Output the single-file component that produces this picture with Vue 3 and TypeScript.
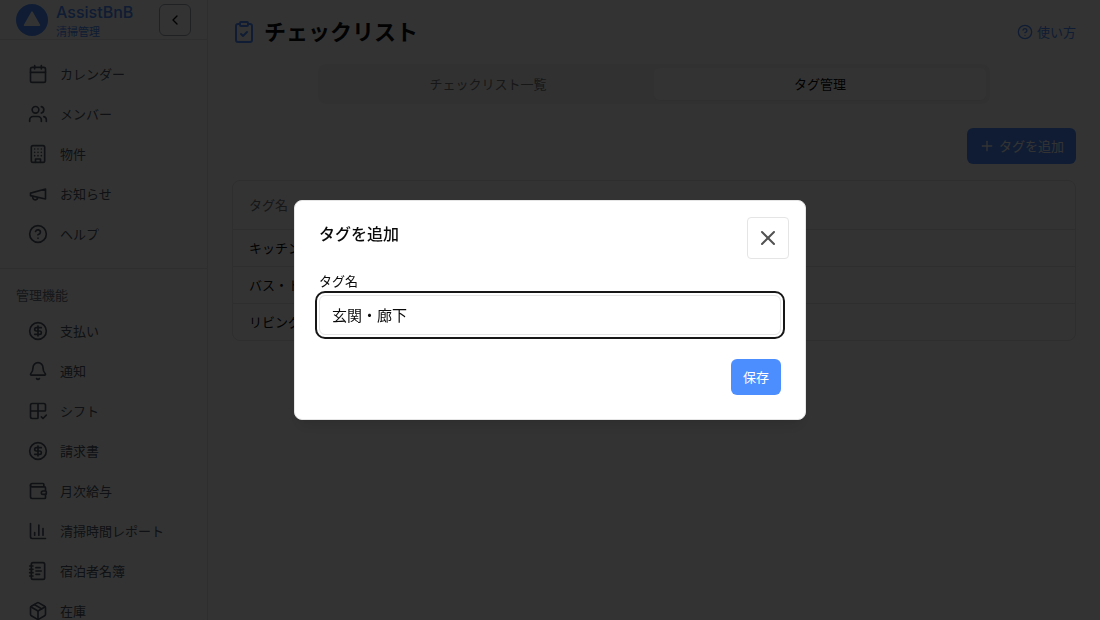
<script setup lang="ts">
import { ref } from 'vue'

type IconName =
  | 'calendar' | 'users' | 'building' | 'megaphone' | 'help' | 'dollar' | 'bell'
  | 'shift' | 'wallet' | 'chart' | 'notebook' | 'box' | 'clipboard' | 'plus' | 'close' | 'chevron'

interface NavItem {
  icon: IconName
  label: string
}

const icons: Record<IconName, string[]> = {
  calendar: ['M5 4h14a2 2 0 0 1 2 2v14a2 2 0 0 1-2 2H5a2 2 0 0 1-2-2V6a2 2 0 0 1 2-2z', 'M8 2v4', 'M16 2v4', 'M3 10h18'],
  users: ['M16 21v-2a4 4 0 0 0-4-4H6a4 4 0 0 0-4 4v2', 'M5 7a4 4 0 1 0 8 0a4 4 0 1 0-8 0', 'M22 21v-2a4 4 0 0 0-3-3.87', 'M16 3.13a4 4 0 0 1 0 7.75'],
  building: ['M6 2h12a2 2 0 0 1 2 2v16a2 2 0 0 1-2 2H6a2 2 0 0 1-2-2V4a2 2 0 0 1 2-2z', 'M9 22v-4h6v4', 'M8 6h.01', 'M16 6h.01', 'M12 6h.01', 'M12 10h.01', 'M12 14h.01', 'M16 10h.01', 'M16 14h.01', 'M8 10h.01', 'M8 14h.01'],
  megaphone: ['m3 11 18-5v12L3 14v-3z', 'M11.6 16.8a3 3 0 1 1-5.8-1.6'],
  help: ['M2 12a10 10 0 1 0 20 0a10 10 0 1 0-20 0', 'M9.09 9a3 3 0 0 1 5.83 1c0 2-3 3-3 3', 'M12 17h.01'],
  dollar: ['M2 12a10 10 0 1 0 20 0a10 10 0 1 0-20 0', 'M16 8h-6a2 2 0 1 0 0 4h4a2 2 0 1 1 0 4H8', 'M12 18V6'],
  bell: ['M10.268 21a2 2 0 0 0 3.464 0', 'M3.262 15.326A1 1 0 0 0 4 17h16a1 1 0 0 0 .74-1.673C19.41 13.956 18 12.499 18 8A6 6 0 0 0 6 8c0 4.499-1.411 5.956-2.738 7.326'],
  shift: ['M12 3v17a1 1 0 0 1-1 1H5a2 2 0 0 1-2-2V5a2 2 0 0 1 2-2h14a2 2 0 0 1 2 2v6a1 1 0 0 1-1 1H3', 'm16 19 2 2 4-4'],
  wallet: ['M19 7V4a1 1 0 0 0-1-1H5a2 2 0 0 0 0 4h15a1 1 0 0 1 1 1v4h-3a2 2 0 0 0 0 4h3a1 1 0 0 0 1-1v-2a1 1 0 0 0-1-1', 'M3 5v14a2 2 0 0 0 2 2h15a1 1 0 0 0 1-1v-4'],
  chart: ['M3 3v16a2 2 0 0 0 2 2h16', 'M18 17V9', 'M13 17V5', 'M8 17v-3'],
  notebook: ['M2 6h4', 'M2 10h4', 'M2 14h4', 'M2 18h4', 'M6 2h12a2 2 0 0 1 2 2v16a2 2 0 0 1-2 2H6a2 2 0 0 1-2-2V4a2 2 0 0 1 2-2z', 'M9.5 8h5', 'M9.5 12H16', 'M9.5 16H14'],
  box: ['M11 21.73a2 2 0 0 0 2 0l7-4A2 2 0 0 0 21 16V8a2 2 0 0 0-1-1.73l-7-4a2 2 0 0 0-2 0l-7 4A2 2 0 0 0 3 8v8a2 2 0 0 0 1 1.73z', 'M12 22V12', 'M3.29 7 12 12l8.71-5', 'm7.5 4.27 9 5.15'],
  clipboard: ['M9 2h6a1 1 0 0 1 1 1v2a1 1 0 0 1-1 1H9a1 1 0 0 1-1-1V3a1 1 0 0 1 1-1z', 'M16 4h2a2 2 0 0 1 2 2v14a2 2 0 0 1-2 2H6a2 2 0 0 1-2-2V6a2 2 0 0 1 2-2h2', 'm9 14 2 2 4-4'],
  plus: ['M5 12h14', 'M12 5v14'],
  close: ['M18 6 6 18', 'm6 6 12 12'],
  chevron: ['m15 18-6-6 6-6'],
}

const mainNav: NavItem[] = [
  { icon: 'calendar', label: 'カレンダー' },
  { icon: 'users', label: 'メンバー' },
  { icon: 'building', label: '物件' },
  { icon: 'megaphone', label: 'お知らせ' },
  { icon: 'help', label: 'ヘルプ' },
]

const adminNav: NavItem[] = [
  { icon: 'dollar', label: '支払い' },
  { icon: 'bell', label: '通知' },
  { icon: 'shift', label: 'シフト' },
  { icon: 'dollar', label: '請求書' },
  { icon: 'wallet', label: '月次給与' },
  { icon: 'chart', label: '清掃時間レポート' },
  { icon: 'notebook', label: '宿泊者名簿' },
  { icon: 'box', label: '在庫' },
]

const tags = ref<string[]>(['キッチン', 'バス・トイレ', 'リビング'])
const tagName = ref('玄関・廊下')
const dialogOpen = ref(true)

function save(): void {
  const name = tagName.value.trim()
  if (name) tags.value.push(name)
  tagName.value = ''
  dialogOpen.value = false
}
</script>

<template>
  <div class="app">
    <aside class="sidebar">
      <header class="brand">
        <svg class="logo" viewBox="0 0 32 32" aria-hidden="true">
          <circle cx="16" cy="16" r="16" fill="#4d8eff" />
          <path d="M16 8.2 23.4 21.2H8.6z" fill="#fff" stroke="#fff" stroke-width="1.6" stroke-linejoin="round" />
        </svg>
        <div class="brand-text">
          <span class="brand-name">AssistBnB</span>
          <span class="brand-sub">清掃管理</span>
        </div>
        <button class="collapse" type="button" aria-label="サイドバーを閉じる">
          <svg class="icon icon-sm" viewBox="0 0 24 24"><path v-for="d in icons.chevron" :key="d" :d="d" /></svg>
        </button>
      </header>
      <nav class="nav">
        <a v-for="item in mainNav" :key="item.label" class="nav-item" href="#">
          <svg class="icon" viewBox="0 0 24 24"><path v-for="d in icons[item.icon]" :key="d" :d="d" /></svg>
          <span>{{ item.label }}</span>
        </a>
      </nav>
      <nav class="nav nav-admin" aria-labelledby="admin-heading">
        <h2 id="admin-heading" class="nav-heading">管理機能</h2>
        <a v-for="item in adminNav" :key="item.label" class="nav-item" href="#">
          <svg class="icon" viewBox="0 0 24 24"><path v-for="d in icons[item.icon]" :key="d" :d="d" /></svg>
          <span>{{ item.label }}</span>
        </a>
      </nav>
    </aside>

    <main class="main">
      <div class="page-head">
        <svg class="icon icon-lg" viewBox="0 0 24 24"><path v-for="d in icons.clipboard" :key="d" :d="d" /></svg>
        <h1>チェックリスト</h1>
        <a class="howto" href="#">
          <svg class="icon icon-sm" viewBox="0 0 24 24"><path v-for="d in icons.help" :key="d" :d="d" /></svg>
          <span>使い方</span>
        </a>
      </div>
      <div class="tabs" role="tablist">
        <button class="tab" type="button" role="tab" aria-selected="false">チェックリスト一覧</button>
        <button class="tab active" type="button" role="tab" aria-selected="true">タグ管理</button>
      </div>
      <div class="actions">
        <button class="primary" type="button" @click="dialogOpen = true">
          <svg class="icon icon-sm" viewBox="0 0 24 24"><path v-for="d in icons.plus" :key="d" :d="d" /></svg>
          <span>タグを追加</span>
        </button>
      </div>
      <div class="card">
        <table>
          <thead>
            <tr><th scope="col">タグ名</th></tr>
          </thead>
          <tbody>
            <tr v-for="tag in tags" :key="tag"><td>{{ tag }}</td></tr>
          </tbody>
        </table>
      </div>
    </main>

    <div v-if="dialogOpen" class="overlay">
      <form class="dialog" role="dialog" aria-modal="true" aria-labelledby="dialog-title" @submit.prevent="save">
        <h2 id="dialog-title" class="dialog-title">タグを追加</h2>
        <button class="close" type="button" aria-label="閉じる" @click="dialogOpen = false">
          <svg class="icon icon-lg" viewBox="0 0 24 24"><path v-for="d in icons.close" :key="d" :d="d" /></svg>
        </button>
        <label class="field-label" for="tag-name">タグ名</label>
        <input id="tag-name" v-model="tagName" class="field" type="text" />
        <div class="dialog-foot">
          <button class="primary" type="submit">保存</button>
        </div>
      </form>
    </div>
  </div>
</template>

<style>
body {
  margin: 0;
}
</style>

<style scoped>
.app,
.app * {
  box-sizing: border-box;
}

.app {
  display: flex;
  height: 100vh;
  overflow: hidden;
  background: #fff;
  color: #0a0a0a;
  font-family: Inter, "Noto Sans CJK JP", sans-serif;
  font-size: 13px;
  line-height: 20px;
}

button,
input {
  font: inherit;
  color: inherit;
}

button {
  cursor: pointer;
}

a {
  color: inherit;
  text-decoration: none;
}

h1,
h2 {
  margin: 0;
}

.icon {
  flex: none;
  width: 20px;
  height: 20px;
  fill: none;
  stroke: currentColor;
  stroke-width: 2;
  stroke-linecap: round;
  stroke-linejoin: round;
}

.icon-sm {
  width: 16px;
  height: 16px;
}

.icon-lg {
  width: 24px;
  height: 24px;
}

.sidebar {
  flex: none;
  width: 208px;
  overflow: hidden;
  border-right: 1px solid #e5e7eb;
}

.brand {
  display: flex;
  align-items: center;
  gap: 8px;
  height: 40px;
  padding: 0 16px;
  border-bottom: 1px solid #e5e7eb;
}

.logo {
  flex: none;
  width: 32px;
  height: 32px;
}

.brand-text {
  display: flex;
  flex: 1;
  flex-direction: column;
  color: #4d8eff;
}

.brand-name {
  font-size: 16px;
  font-weight: 500;
  line-height: 24px;
}

.brand-sub {
  font-size: 11px;
  line-height: 16px;
}

.collapse {
  display: grid;
  flex: none;
  place-items: center;
  width: 32px;
  height: 32px;
  padding: 0;
  border: 1px solid #9ca3af;
  border-radius: 6px;
  background: #fff;
}

.nav {
  display: flex;
  flex-direction: column;
  gap: 4px;
  padding: 16px;
}

.nav-item {
  display: flex;
  flex: none;
  align-items: center;
  gap: 12px;
  height: 36px;
  padding: 0 12px;
  color: #4b5563;
  white-space: nowrap;
}

.nav-admin {
  padding-top: 8px;
  border-top: 1px solid #e5e7eb;
}

.nav-heading {
  margin-bottom: -4px;
  padding: 8px 0;
  color: #6b7280;
  font-size: 13px;
  font-weight: 400;
}

.main {
  flex: 1;
  min-width: 0;
  padding: 16px 24px;
}

.page-head {
  display: flex;
  align-items: center;
  gap: 8px;
  height: 32px;
}

.page-head > .icon {
  color: #4d8eff;
}

h1 {
  flex: 1;
  font-size: 22px;
  font-weight: 600;
  line-height: 32px;
}

.howto {
  display: flex;
  align-items: center;
  gap: 4px;
  color: #4d8eff;
}

.tabs {
  display: grid;
  grid-template-columns: 1fr 1fr;
  max-width: 672px;
  height: 40px;
  margin: 16px auto 24px;
  padding: 4px;
  border-radius: 8px;
  background: #f5f5f5;
}

.tab {
  border: 0;
  border-radius: 6px;
  background: none;
  color: #737373;
}

.tab.active {
  background: #fff;
  color: #0a0a0a;
  box-shadow: 0 1px 2px rgba(0, 0, 0, 0.05);
}

.actions {
  display: flex;
  justify-content: flex-end;
  margin-bottom: 16px;
}

.primary {
  display: flex;
  align-items: center;
  gap: 4px;
  height: 36px;
  padding: 0 12px;
  border: 0;
  border-radius: 6px;
  background: #4d8eff;
  color: #fff;
}

.card {
  overflow: hidden;
  border: 1px solid #e5e5e5;
  border-radius: 8px;
}

table {
  width: 100%;
  border-collapse: separate;
  border-spacing: 0;
}

th,
td {
  padding: 8px 16px;
  border-bottom: 1px solid #e5e5e5;
  font-weight: 400;
  text-align: left;
}

th {
  padding: 14px 16px;
  color: #737373;
}

tbody tr:last-child td {
  border-bottom: 0;
}

.overlay {
  position: fixed;
  inset: 0;
  display: grid;
  place-items: center;
  padding: 16px;
  background: rgba(0, 0, 0, 0.8);
}

.dialog {
  position: relative;
  display: flex;
  flex-direction: column;
  width: 100%;
  max-width: 512px;
  padding: 24px;
  border: 1px solid #e5e5e5;
  border-radius: 8px;
  background: #fff;
  box-shadow: 0 10px 15px -3px rgba(0, 0, 0, 0.1), 0 4px 6px -4px rgba(0, 0, 0, 0.1);
}

.dialog-title {
  margin-bottom: 28px;
  font-size: 16px;
  font-weight: 500;
  line-height: 18px;
}

.close {
  position: absolute;
  top: 16px;
  right: 16px;
  display: grid;
  place-items: center;
  width: 42px;
  height: 42px;
  padding: 0;
  border: 1px solid #e5e5e5;
  border-radius: 4px;
  background: #fff;
  color: #525252;
}

.field-label {
  margin-bottom: 4px;
}

.field {
  width: 100%;
  height: 40px;
  padding: 0 12px 2px;
  border: 1px solid #e5e5e5;
  border-radius: 6px;
  outline: 2px solid #171717;
  outline-offset: 2px;
  background: #fff;
  font-size: 15px;
}

.dialog-foot {
  display: flex;
  justify-content: flex-end;
  margin-top: 24px;
}
</style>
